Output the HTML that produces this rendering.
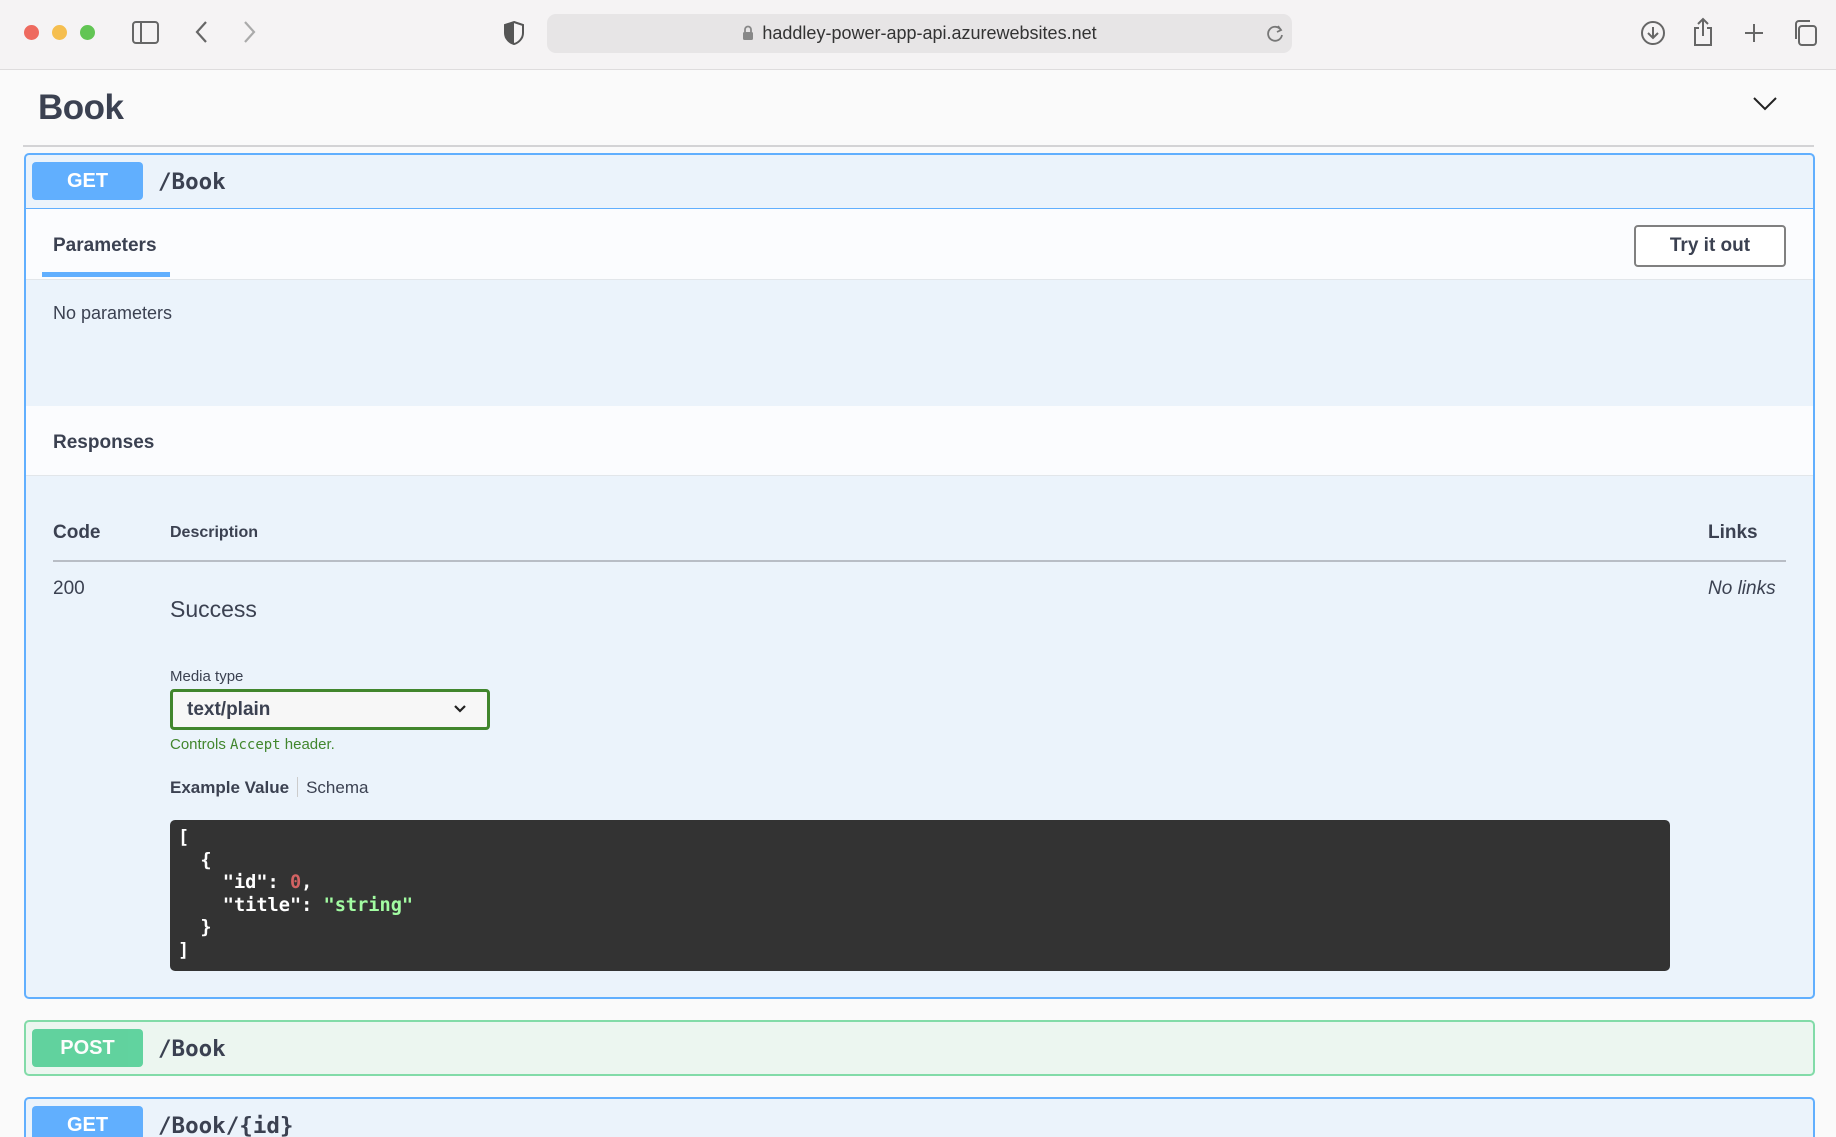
<!DOCTYPE html>
<html><head><meta charset="utf-8"><style>
*{box-sizing:border-box;margin:0;padding:0}
html,body{width:1836px;height:1137px;overflow:hidden}
body{background:#fafafa;font-family:"Liberation Sans",sans-serif;color:#3b4151;position:relative}
.abs{position:absolute}
.tb{left:0;top:0;width:1836px;height:70px;background:#f5f3f4;border-bottom:1px solid #dedcdd}
.dot{width:15px;height:15px;border-radius:50%;top:25px}
.addr{left:547px;top:14px;width:745px;height:39px;background:#e7e5e6;border-radius:9px;font-size:18px;color:#333;text-align:center;line-height:39px}
.mono{font-family:"DejaVu Sans Mono","Liberation Mono",monospace}
.blk{left:24px;width:1791px;border:2px solid #61affe;border-radius:5px;background:#ebf3fb}
.badge{position:absolute;left:6px;width:111px;height:38px;border-radius:4px;color:#fff;font-weight:bold;font-size:20px;text-align:center;line-height:38px}
.path{position:absolute;left:132px;font-weight:bold;font-size:22.5px;color:#3b4151}
</style></head><body>
<div class="abs tb">
 <div class="abs dot" style="left:24px;background:#ee6a5f"></div>
 <div class="abs dot" style="left:52px;background:#f5be4f"></div>
 <div class="abs dot" style="left:80px;background:#62c554"></div>
 <svg class="abs" style="left:132px;top:20px" width="28" height="26" viewBox="0 0 28 26" fill="none" stroke="#666" stroke-width="2"><rect x="1" y="2" width="25" height="21" rx="3"/><line x1="9" y1="2" x2="9" y2="23"/></svg>
 <svg class="abs" style="left:194px;top:20px" width="14" height="24" viewBox="0 0 14 24" fill="none" stroke="#666" stroke-width="2.2"><path d="M12 2 L3 12 L12 22"/></svg>
 <svg class="abs" style="left:243px;top:20px" width="14" height="24" viewBox="0 0 14 24" fill="none" stroke="#aaa" stroke-width="2.2"><path d="M2 2 L11 12 L2 22"/></svg>
 <svg class="abs" style="left:503px;top:20px" width="22" height="26" viewBox="0 0 22 26"><path d="M11 2 L20 5 V13 C20 19 15 23 11 24 C7 23 2 19 2 13 V5 Z" fill="none" stroke="#555" stroke-width="2"/><path d="M11 2 L2 5 V13 C2 19 7 23 11 24 Z" fill="#555"/></svg>
 <div class="abs addr"><svg width="12" height="16" viewBox="0 0 12 16" style="vertical-align:-2px;margin-right:8px"><path d="M3 7 V4.5 A3 3 0 0 1 9 4.5 V7" fill="none" stroke="#888" stroke-width="1.8"/><rect x="1" y="7" width="10" height="8" rx="1.5" fill="#888"/></svg>haddley-power-app-api.azurewebsites.net</div>
 <svg class="abs" style="left:1266px;top:23px" width="18" height="22" viewBox="0 0 18 22" fill="none" stroke="#777" stroke-width="1.8"><path d="M15 7 A7 7 0 1 0 16 12"/><path d="M12 3 L15 7 L11 9"/></svg>
 <svg class="abs" style="left:1640px;top:20px" width="26" height="26" viewBox="0 0 26 26" fill="none" stroke="#666" stroke-width="2"><circle cx="13" cy="13" r="11"/><path d="M13 7 V18 M8 13 L13 18 L18 13"/></svg>
 <svg class="abs" style="left:1692px;top:17px" width="22" height="30" viewBox="0 0 22 30" fill="none" stroke="#666" stroke-width="2"><path d="M7 11 H3 V28 H19 V11 H15 M11 2 V19 M6 7 L11 2 L16 7"/></svg>
 <svg class="abs" style="left:1743px;top:22px" width="22" height="22" viewBox="0 0 22 22" stroke="#666" stroke-width="2"><path d="M11 2 V20 M2 11 H20"/></svg>
 <svg class="abs" style="left:1792px;top:19px" width="26" height="28" viewBox="0 0 26 28" fill="none" stroke="#666" stroke-width="2"><rect x="7" y="7" width="17" height="19" rx="3"/><path d="M4 20 V5 A3 3 0 0 1 7 2 H18"/></svg>
</div>

<div class="abs" style="left:38px;top:88px;font-size:35px;font-weight:bold;letter-spacing:-0.5px">Book</div>
<svg class="abs" style="left:1752px;top:96px" width="26" height="16" viewBox="0 0 26 16" fill="none" stroke="#222" stroke-width="2"><path d="M2 2 L13 13 L24 2"/></svg>
<div class="abs" style="left:23px;top:145px;width:1791px;height:2px;background:#d3d3d5"></div>

<div class="abs blk" style="top:153px;height:846px">
 <div class="badge" style="top:7px;background:#61affe">GET</div>
 <div class="path mono" style="top:14px">/Book</div>
 <div class="abs" style="left:0;top:53px;width:1787px;height:1px;background:#61affe"></div>
 <div class="abs" style="left:0;top:54px;width:1787px;height:71px;background:#fbfcfe;border-bottom:1px solid #e2e6ea"></div>
 <div class="abs" style="left:27px;top:80px;font-size:19px;font-weight:bold">Parameters</div>
 <div class="abs" style="left:16px;top:117px;width:128px;height:5px;background:#61affe"></div>
 <div class="abs" style="left:1608px;top:70px;width:152px;height:42px;border:2px solid #808080;border-radius:4px;background:#fff;font-size:19px;font-weight:bold;text-align:center;line-height:38px">Try it out</div>
 <div class="abs" style="left:27px;top:148px;font-size:18px">No parameters</div>
 <div class="abs" style="left:0;top:251px;width:1787px;height:70px;background:#fbfcfe;border-bottom:1px solid #e2e6ea"></div>
 <div class="abs" style="left:27px;top:277px;font-size:19px;font-weight:bold">Responses</div>
 <div class="abs" style="left:27px;top:367px;font-size:19px;font-weight:bold">Code</div>
 <div class="abs" style="left:144px;top:369px;font-size:16px;font-weight:bold">Description</div>
 <div class="abs" style="left:1682px;top:367px;font-size:19px;font-weight:bold">Links</div>
 <div class="abs" style="left:27px;top:405px;width:1733px;height:2px;background:#b8bdc5"></div>
 <div class="abs" style="left:27px;top:423px;font-size:19px">200</div>
 <div class="abs" style="left:1682px;top:423px;font-size:19px;font-style:italic">No links</div>
 <div class="abs" style="left:144px;top:441px;font-size:23px">Success</div>
 <div class="abs" style="left:144px;top:513px;font-size:15px">Media type</div>
 <div class="abs" style="left:144px;top:534px;width:320px;height:41px;border:3px solid #41862d;border-radius:4px;background:#f7f7f7;font-size:19px;font-weight:bold;line-height:35px;padding-left:14px">text/plain
  <svg class="abs" style="right:20px;top:12px" width="14" height="10" viewBox="0 0 14 10" fill="none" stroke="#222" stroke-width="2.2"><path d="M2 2 L7 7 L12 2"/></svg></div>
 <div class="abs" style="left:144px;top:581px;font-size:15px;color:#41862d">Controls <span class="mono" style="font-size:14px">Accept</span> header.</div>
 <div class="abs" style="left:144px;top:622px;font-size:17px"><b>Example Value</b><span style="display:inline-block;width:1px;height:20px;background:#ccc;margin:0 8px;vertical-align:-4px"></span>Schema</div>
 <div class="abs mono" style="left:144px;top:665px;width:1500px;height:151px;background:#333;border-radius:5px;color:#fff;font-size:18.6px;font-weight:bold;line-height:22.5px;padding:7px 8px;white-space:pre">[
  {
    "id": <span style="color:#d36363">0</span>,
    "title": <span style="color:#a2fca2">"string"</span>
  }
]</div>
</div>

<div class="abs blk" style="top:1020px;height:56px;border-color:#82dba8;background:#ecf6f0">
 <div class="badge" style="top:7px;background:#49cc90;opacity:.85">POST</div>
 <div class="path mono" style="top:14px">/Book</div>
</div>
<div class="abs blk" style="top:1097px;height:90px">
 <div class="badge" style="top:7px;background:#61affe">GET</div>
 <div class="path mono" style="top:14px">/Book/{id}</div>
</div>
</body></html>
